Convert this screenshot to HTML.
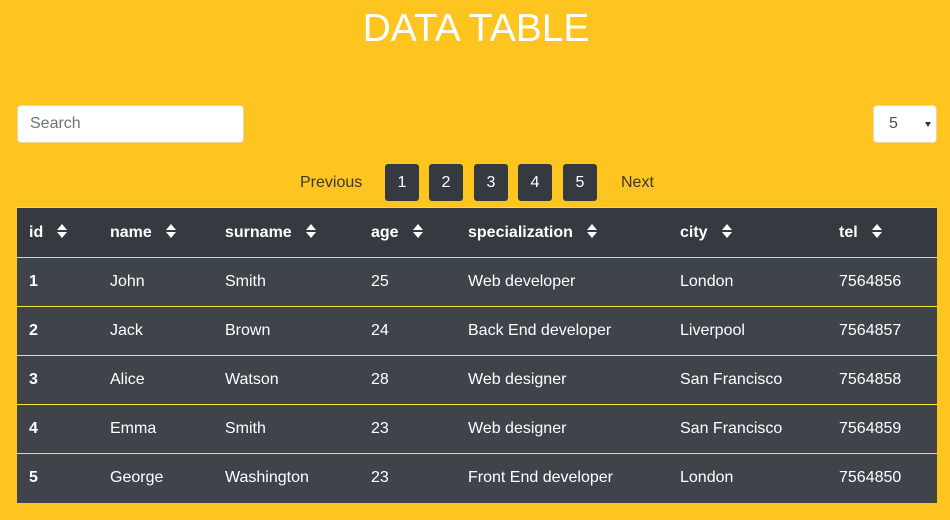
<!DOCTYPE html>
<html><head><style>
*{margin:0;padding:0;box-sizing:border-box}
body{width:950px;height:520px;background:#fec41f;font-family:"Liberation Sans",sans-serif;position:relative;overflow:hidden}
h1{position:absolute;top:7px;left:0;width:952px;text-align:center;color:#fff;font-weight:400;font-size:39px}
.search{position:absolute;left:17px;top:105px;width:227px;height:38px;background:#fff;border:1px solid #e8d9a8;border-radius:4px;color:#6c757d;font-size:16px;padding:9px 12px}
.sel{position:absolute;left:873px;top:105px;width:64px;height:38px;background:#fff;border:1px solid #e8d9a8;border-radius:4px;color:#495057;font-size:16px;padding:9px 15px}
.sel:after{content:"";position:absolute;right:5px;top:16px;border:3.5px solid transparent;border-top:5px solid #333}
.pg{position:absolute;top:164px;height:37px;font-size:16px;line-height:37px;color:#3a3a2a}
.b{width:34px;background:#343a40;color:#fff;border-radius:3px;text-align:center}
table{position:absolute;left:17px;top:207px;width:920px;border-collapse:collapse;color:#fff;font-size:16px;table-layout:fixed}
th,td{height:49px;border-top:1px solid #f5e71f;text-align:left;padding:0 0 0 12px}
th{background:#343a40;font-weight:700;height:50px}
td{background:#3e444a}
tr td:first-child{font-weight:700}
.s{display:inline-block;position:relative;width:10px;height:14px;vertical-align:middle;margin-left:14px;top:-1px}
.s:before,.s:after{content:"";position:absolute;left:0;border-left:5px solid transparent;border-right:5px solid transparent}
.s:before{top:0;border-bottom:6px solid #fff}
.s:after{bottom:0;border-top:6px solid #fff}
</style></head><body>
<h1>DATA TABLE</h1>
<div class="search">Search</div>
<div class="sel">5</div>
<div class="pg" style="left:300px">Previous</div>
<div class="pg b" style="left:385px">1</div>
<div class="pg b" style="left:429px">2</div>
<div class="pg b" style="left:474px">3</div>
<div class="pg b" style="left:518px">4</div>
<div class="pg b" style="left:563px">5</div>
<div class="pg" style="left:621px">Next</div>
<table>
<colgroup><col style="width:81px"><col style="width:115px"><col style="width:146px"><col style="width:97px"><col style="width:212px"><col style="width:159px"><col style="width:110px"></colgroup>
<tr><th>id<span class="s"></span></th><th>name<span class="s"></span></th><th>surname<span class="s"></span></th><th>age<span class="s"></span></th><th>specialization<span class="s"></span></th><th>city<span class="s"></span></th><th>tel<span class="s"></span></th></tr>
<tr><td>1</td><td>John</td><td>Smith</td><td>25</td><td>Web developer</td><td>London</td><td>7564856</td></tr>
<tr><td>2</td><td>Jack</td><td>Brown</td><td>24</td><td>Back End developer</td><td>Liverpool</td><td>7564857</td></tr>
<tr><td>3</td><td>Alice</td><td>Watson</td><td>28</td><td>Web designer</td><td>San Francisco</td><td>7564858</td></tr>
<tr><td>4</td><td>Emma</td><td>Smith</td><td>23</td><td>Web designer</td><td>San Francisco</td><td>7564859</td></tr>
<tr><td>5</td><td>George</td><td>Washington</td><td>23</td><td>Front End developer</td><td>London</td><td>7564850</td></tr>
</table>
</body></html>
